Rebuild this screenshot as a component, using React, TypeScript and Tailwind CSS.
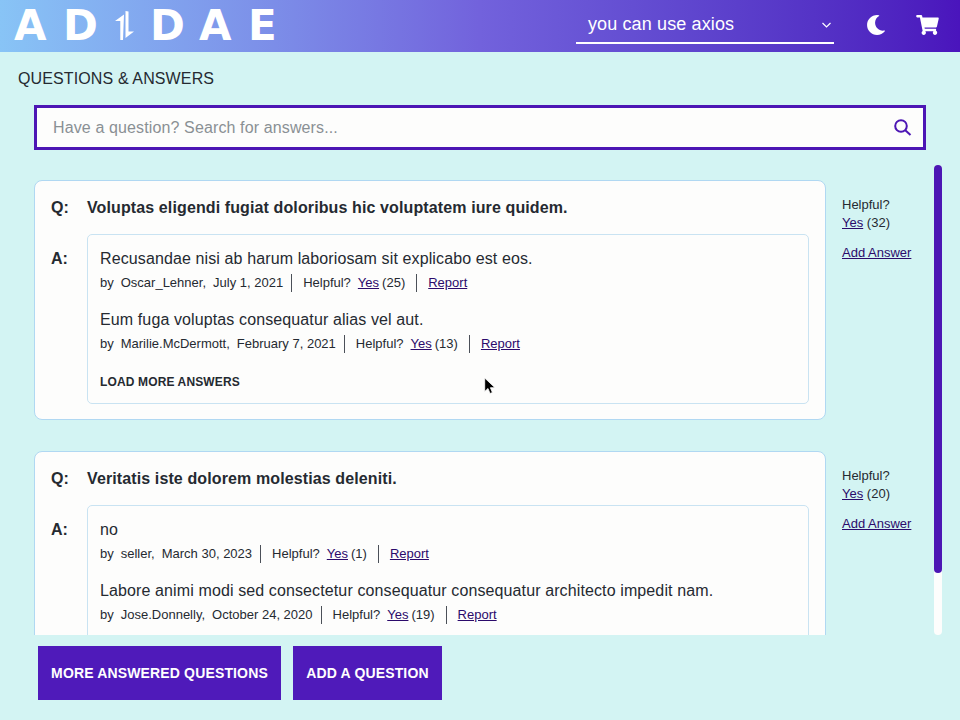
import React from "react";
import { FaMoon, FaShoppingCart } from "react-icons/fa";

type Answer = { body: string; by: string; date: string; helpful: number };
type Question = { title: string; helpful: number; hasMoreAnswers: boolean; answers: Answer[] };

const questions: Question[] = [
  {
    title: "Voluptas eligendi fugiat doloribus hic voluptatem iure quidem.",
    helpful: 32,
    hasMoreAnswers: true,
    answers: [
      { body: "Recusandae nisi ab harum laboriosam sit explicabo est eos.", by: "Oscar_Lehner", date: "July 1, 2021", helpful: 25 },
      { body: "Eum fuga voluptas consequatur alias vel aut.", by: "Marilie.McDermott", date: "February 7, 2021", helpful: 13 },
    ],
  },
  {
    title: "Veritatis iste dolorem molestias deleniti.",
    helpful: 20,
    hasMoreAnswers: false,
    answers: [
      { body: "no", by: "seller", date: "March 30, 2023", helpful: 1 },
      { body: "Labore animi modi sed consectetur consequatur consequatur architecto impedit nam.", by: "Jose.Donnelly", date: "October 24, 2020", helpful: 19 },
    ],
  },
];

function Logo() {
  return (
    <div className="flex h-[52px] items-center pl-[14px] font-['DejaVu_Sans',sans-serif] text-[42px] font-bold leading-[52px] text-white">
      <span className="w-[49px]">A</span>
      <span className="w-[52px]">D</span>
      <svg className="mr-[16px] h-[30px] w-[19px]" viewBox="0 0 19 30" fill="#fff">
        <path d="M0 10 9 3.5 8 29H5.3V10zM10.5 0l3 .6v20h5.5L10.5 27z" />
      </svg>
      <span className="w-[49px]">D</span>
      <span className="w-[49px]">A</span>
      <span>E</span>
    </div>
  );
}

function AnswerRow({ a }: { a: Answer }) {
  return (
    <div className="h-[61px]">
      <p className="h-6 text-[16px] leading-6 tracking-[0.115px]">{a.body}</p>
      <div className="flex h-6 items-center text-[13px]">
        <span className="mr-[7px]">by</span>
        <span className="mr-[7px]">{a.by},</span>
        <span>{a.date}</span>
        <span className="ml-[8px] mr-[11px] h-[18px] w-px bg-[#4b5058]" />
        <span className="mr-[7px]">Helpful?</span>
        <span className="text-[#2b0a6b] underline">Yes</span>
        <span className="ml-[3px]">({a.helpful})</span>
        <span className="ml-[11px] mr-[11px] h-[18px] w-px bg-[#4b5058]" />
        <span className="text-[#2b0a6b] underline">Report</span>
      </div>
    </div>
  );
}

function QuestionCard({ q }: { q: Question }) {
  return (
    <div className="flex h-[240px] shrink-0">
      <section className="w-[792px] rounded-lg border border-[#b0d8f2] bg-[#fdfdfc] px-4 pt-[15px]">
        <h2 className="flex h-6 items-center text-[16px] font-bold tracking-[0.115px]">
          <span className="w-9">Q:</span>
          {q.title}
        </h2>
        <div className="mt-[14px] flex">
          <span className="w-9 pt-[13px] text-[16px] font-bold leading-6">A:</span>
          <div className="h-[170px] w-[722px] rounded-[5px] border border-[#c9e3f2] pl-3 pt-3">
            {q.answers.map((a) => (
              <AnswerRow key={a.by} a={a} />
            ))}
            {q.hasMoreAnswers && (
              <button className="mt-[3px] block text-[12px] font-bold leading-5 tracking-[0.14px]">LOAD MORE ANSWERS</button>
            )}
          </div>
        </div>
      </section>
      <aside className="ml-4 pt-4 text-[13px] leading-[18px]">
        <p>Helpful?</p>
        <p>
          <span className="text-[#2b0a6b] underline">Yes</span> ({q.helpful})
        </p>
        <p className="mt-3 text-[#2b0a6b] underline">Add Answer</p>
      </aside>
    </div>
  );
}

export default function App() {
  return (
    <div className="relative flex h-[720px] w-[960px] flex-col overflow-hidden bg-[#d3f4f3] font-['Liberation_Sans',sans-serif] text-[#252a31]">
      <header className="flex h-[52px] shrink-0 bg-linear-to-r from-[#88c4f6] via-[#7262dc] to-[#4a14bc]">
        <Logo />
        <div className="ml-auto flex h-[44px] w-[258px] items-center justify-between border-b-2 border-white px-3 pt-[7px] text-[18px] tracking-[0.12px] text-white">
          <span>you can use axios</span>
          <svg className="-mr-[9px] h-2 w-[9px]" viewBox="0 0 9 8" fill="none" stroke="#fff" strokeWidth="1.2">
            <path d="m.5 2 4 4 4-4" />
          </svg>
        </div>
        <FaMoon className="ml-[32px] mt-[15px] size-5 text-white" />
        <FaShoppingCart className="ml-[30px] mr-[21px] mt-[15px] h-5 w-[23px] text-white" />
      </header>
      <h1 className="ml-[18px] mt-[15px] h-6 text-[16px] leading-6 tracking-[0.12px]">QUESTIONS &amp; ANSWERS</h1>
      <div className="ml-[34px] mt-[14px] flex h-[45px] w-[892px] shrink-0 items-center justify-between border-[3px] border-[#4c16b4] bg-[#fdfdfc] px-4 text-[16px]">
        <span className="tracking-[0.125px] text-[#8a9094]">Have a question? Search for answers...</span>
        <svg className="-mr-[6px] size-5" viewBox="0 0 20 20" fill="none" stroke="#4c16b4" strokeWidth="2">
          <circle cx="8" cy="8" r="5.8" />
          <path d="m12 12 5.5 5" />
        </svg>
      </div>
      <main className="mt-[14px] flex h-[471px] shrink-0">
        <div className="ml-[34px] flex w-[900px] flex-col gap-[31px] overflow-hidden pt-4">
          {questions.map((q) => (
            <QuestionCard key={q.title} q={q} />
          ))}
        </div>
        <div className="mt-px h-[470px] w-2 rounded-full bg-[#fdfdfc]">
          <div className="h-[408px] rounded-full bg-[#4c16b4]" />
        </div>
      </main>
      <footer className="ml-[38px] mt-[11px] flex h-[54px] gap-3 text-[14px] font-bold tracking-[0.15px] text-white">
        <button className="w-[243px] bg-[#4f1aba]">MORE ANSWERED QUESTIONS</button>
        <button className="w-[149px] bg-[#4f1aba]">ADD A QUESTION</button>
      </footer>
      <svg className="absolute left-[484px] top-[377px] h-[18px] w-[12px]" viewBox="0 0 12 18" fill="#000" stroke="#fff" strokeWidth=".8">
        <path d="M.7 1v13.5L4 11.5l2 5 2.4-1-2-4.8H11z" />
      </svg>
    </div>
  );
}
